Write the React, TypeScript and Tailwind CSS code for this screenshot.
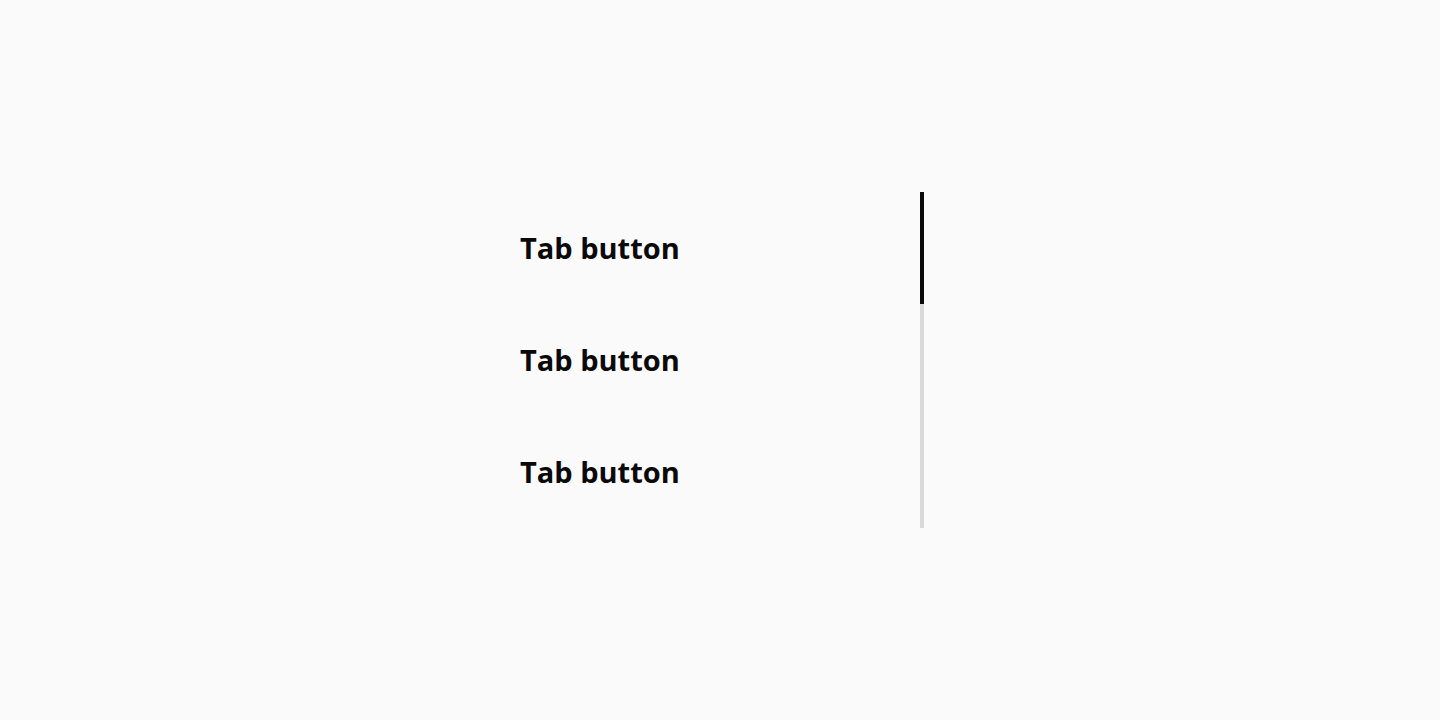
const tabs = ['Tab button', 'Tab button', 'Tab button']

export default function App() {
  const active = 0
  return (
    <div className="min-h-screen w-full bg-[#fafafa] flex items-center justify-center font-['Open_Sans',sans-serif]">
      <div className="flex flex-col w-[408px]">
        {tabs.map((label, i) => (
          <button
            key={i}
            className={`h-[112px] flex items-center pl-1 text-left text-[29px] font-bold text-[#0a0a0a] border-r-4 ${
              i === active ? 'border-[#0a0a0a]' : 'border-[#d9d9d9]'
            }`}
          >
            {label}
          </button>
        ))}
      </div>
    </div>
  )
}
